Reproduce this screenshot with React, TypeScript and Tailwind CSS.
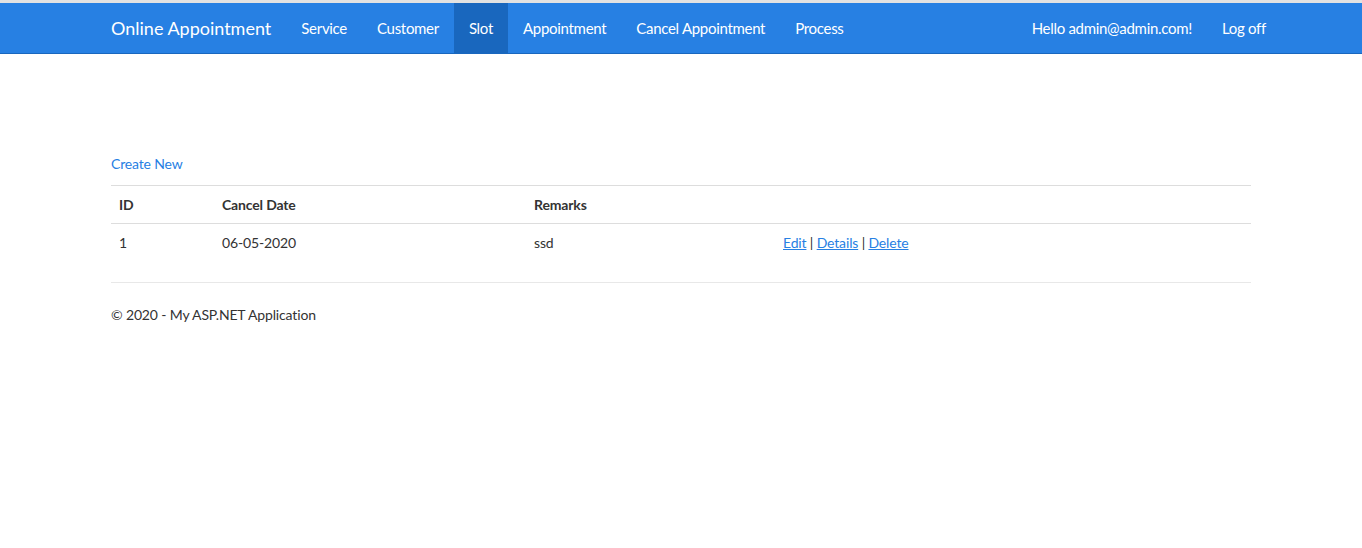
const navLinks = ["Service", "Customer", "Slot", "Appointment", "Cancel Appointment", "Process"];

const font = { fontFamily: "Lato, 'Noto Sans', sans-serif" };

export default function App() {
  return (
    <div className="min-h-[548px] bg-white text-[14px] leading-[21px] tracking-[-0.15px] text-[#333]" style={font}>
      <div className="h-[3px] bg-[#e2e2e2]" />
      {/* Navbar */}
      <nav className="h-[51px] bg-[#2780e3] border-b border-[#1967be]">
        <div className="mx-auto flex h-[50px] w-[1170px] items-stretch px-[15px] text-[15px] tracking-[-0.3px]">
          <a className="-ml-[15px] flex items-center px-[15px] text-[18px] tracking-normal text-white">Online Appointment</a>
          <ul className="flex items-stretch">
            {navLinks.map((link) => (
              <li key={link}>
                <a
                  className={
                    "flex h-full items-center px-[15px] text-white " +
                    (link === "Slot" ? "bg-[#1967be]" : "")
                  }
                >
                  {link}
                </a>
              </li>
            ))}
          </ul>
          <ul className="-mr-[30px] ml-auto flex items-stretch">
            <li>
              <a className="flex h-full items-center px-[15px] text-white">Hello admin@admin.com!</a>
            </li>
            <li>
              <a className="flex h-full items-center px-[15px] text-white">Log off</a>
            </li>
          </ul>
        </div>
      </nav>

      {/* Body */}
      <div className="mx-auto w-[1170px] px-[15px] pt-[99px]">
        <p className="mb-[11px]">
          <a className="text-[#2780e3]">Create New</a>
        </p>
        <table className="w-full border-collapse">
          <thead>
            <tr className="border-t border-b border-[#dddddd] text-left font-bold">
              <th className="w-[103px] p-[8px]">ID</th>
              <th className="w-[312px] p-[8px]">Cancel Date</th>
              <th className="w-[249px] p-[8px]">Remarks</th>
              <th className="p-[8px]"></th>
            </tr>
          </thead>
          <tbody>
            <tr>
              <td className="p-[8px]">1</td>
              <td className="p-[8px]">06-05-2020</td>
              <td className="p-[8px]">ssd</td>
              <td className="p-[8px]">
                <a className="text-[#2780e3] underline">Edit</a> |{" "}
                <a className="text-[#2780e3] underline">Details</a> |{" "}
                <a className="text-[#2780e3] underline">Delete</a>
              </td>
            </tr>
          </tbody>
        </table>
        <hr className="mt-[21px] border-t border-[#e8e8e8]" />
        <footer className="pt-[21px]">
          <p>© 2020 - My ASP.NET Application</p>
        </footer>
      </div>
    </div>
  );
}
